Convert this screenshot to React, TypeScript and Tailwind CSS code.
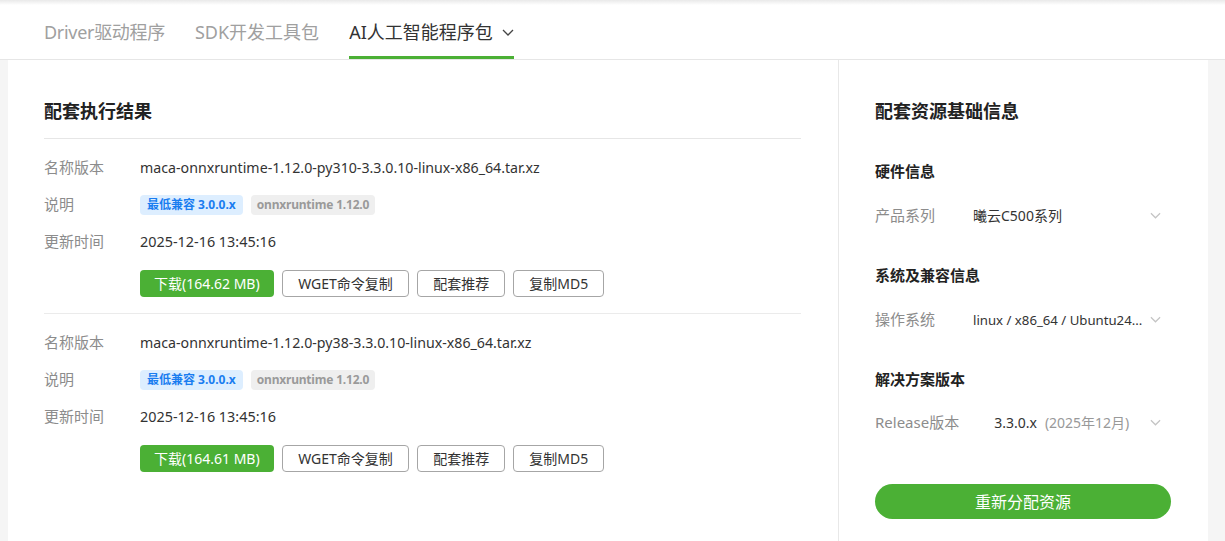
import React from "react";

const font = { fontFamily: '"Noto Sans", "Noto Sans CJK SC", sans-serif' };

function Chevron({ color = "#333", w = 12, h = 7 }: { color?: string; w?: number; h?: number }) {
  return (
    <svg width={w} height={h} viewBox="0 0 12 7" fill="none" className="shrink-0">
      <polyline points="1,1 6,6 11,1" stroke={color} strokeWidth="1.3" />
    </svg>
  );
}

function Block({ name, size, last }: { name: string; size: string; last?: boolean }) {
  return (
    <div className={last ? "pt-[10px] pb-[16px]" : "pt-[10px] pb-[16px] border-b border-[#ebebeb]"}>
      <div className="h-[37px] flex items-center">
        <div className="w-[96px] text-[15px] text-[#8c8c8c]">名称版本</div>
        <div className="text-[14.2px] text-[#333]">{name}</div>
      </div>
      <div className="h-[37px] flex items-center">
        <div className="w-[96px] text-[15px] text-[#8c8c8c]">说明</div>
        <div className="flex gap-[8px]">
          <span className="h-[20px] px-[7px] rounded-[4px] bg-[#ddeeff] text-[#1a7df0] text-[12px] font-bold leading-[20px]">
            最低兼容 3.0.0.x
          </span>
          <span className="h-[20px] px-[6px] rounded-[4px] bg-[#efefef] text-[#9a9a9a] text-[12px] font-bold leading-[20px] tracking-[-0.2px]">
            onnxruntime 1.12.0
          </span>
        </div>
      </div>
      <div className="h-[37px] flex items-center">
        <div className="w-[96px] text-[15px] text-[#8c8c8c]">更新时间</div>
        <div className="text-[14.4px] text-[#333]">2025-12-16 13:45:16</div>
      </div>
      <div className="mt-[10px] ml-[96px] flex gap-[8px] text-[14px]">
        <button className="h-[27px] px-[14px] rounded-[4px] bg-[#4bb035] text-white">下载({size})</button>
        <button className="h-[27px] px-[15.5px] rounded-[4px] border border-[#a6a6a6] text-[#333] bg-white">WGET命令复制</button>
        <button className="h-[27px] px-[15px] rounded-[4px] border border-[#a6a6a6] text-[#333] bg-white">配套推荐</button>
        <button className="h-[27px] px-[15px] rounded-[4px] border border-[#a6a6a6] text-[#333] bg-white">复制MD5</button>
      </div>
    </div>
  );
}

function SelectRow({ label, labelGap, children }: { label: string; labelGap: string; children: React.ReactNode }) {
  return (
    <div className="h-[40px] flex items-center">
      <div className={`${labelGap} text-[15px] text-[#8c8c8c] whitespace-nowrap`}>{label}</div>
      <div className="flex-1 min-w-0 flex items-center gap-[4px] pr-[10px]">
        <div className="flex-1 min-w-0 whitespace-nowrap text-[#333]">{children}</div>
        <Chevron color="#c4c4c4" w={11} h={7} />
      </div>
    </div>
  );
}

export default function App() {
  return (
    <div style={font} className="w-[1225px] h-[541px] bg-[#f5f5f5] overflow-hidden flex flex-col">
      <div className="bg-white border-b border-[#e6e6e6]">
        <div className="h-[5px] bg-gradient-to-b from-[#e9e9e9] to-white" />
        <div className="h-[54px] flex gap-[30px] pl-[44px] text-[18px]">
          <div className="flex items-center text-[#a0a0a0] tracking-[-0.3px]">Driver驱动程序</div>
          <div className="flex items-center text-[#a0a0a0]">SDK开发工具包</div>
          <div className="flex items-center gap-[9px] text-[#333] border-b-[3px] border-[#4bb035] pt-[3px]">
            <span>AI人工智能程序包</span>
            <Chevron color="#444" w={12} h={7} />
          </div>
        </div>
      </div>
      <div className="flex-1 flex pl-[8px] pr-[17px]">
        <div className="w-[831px] shrink-0 bg-white border-r border-[#e8e8e8] pl-[36px] pr-[37px]">
          <div className="mt-[38px] h-[27px] leading-[27px] text-[18px] font-bold text-[#222] box-content pb-[13px] border-b border-[#e6e6e6]">
            配套执行结果
          </div>
          <Block name="maca-onnxruntime-1.12.0-py310-3.3.0.10-linux-x86_64.tar.xz" size="164.62 MB" />
          <Block name="maca-onnxruntime-1.12.0-py38-3.3.0.10-linux-x86_64.tar.xz" size="164.61 MB" last />
        </div>
        <div className="flex-1 min-w-0 bg-white pl-[36px] pr-[37px]">
          <div className="mt-[38px] h-[27px] leading-[27px] text-[18px] font-bold text-[#222]">配套资源基础信息</div>
          <div className="mt-[36px] h-[20px] leading-[20px] text-[15px] font-bold text-[#222]">硬件信息</div>
          <div className="mt-[14px]">
            <SelectRow label="产品系列" labelGap="mr-[38px]">
              <span className="text-[14px]">曦云C500系列</span>
            </SelectRow>
          </div>
          <div className="mt-[30px] h-[20px] leading-[20px] text-[15px] font-bold text-[#222]">系统及兼容信息</div>
          <div className="mt-[14px]">
            <SelectRow label="操作系统" labelGap="mr-[38px]">
              <span className="text-[13.2px]">linux / x86_64 / Ubuntu24...</span>
            </SelectRow>
          </div>
          <div className="mt-[30px] h-[20px] leading-[20px] text-[15px] font-bold text-[#222]">解决方案版本</div>
          <div className="mt-[13px]">
            <SelectRow label="Release版本" labelGap="mr-[35px]">
              <span className="text-[14px]">
                3.3.0.x<span className="ml-[8px] text-[#999]">(2025年12月)</span>
              </span>
            </SelectRow>
          </div>
          <button className="mt-[42px] w-full h-[35px] rounded-full bg-[#4bb035] text-white text-[16px]">重新分配资源</button>
        </div>
      </div>
    </div>
  );
}
